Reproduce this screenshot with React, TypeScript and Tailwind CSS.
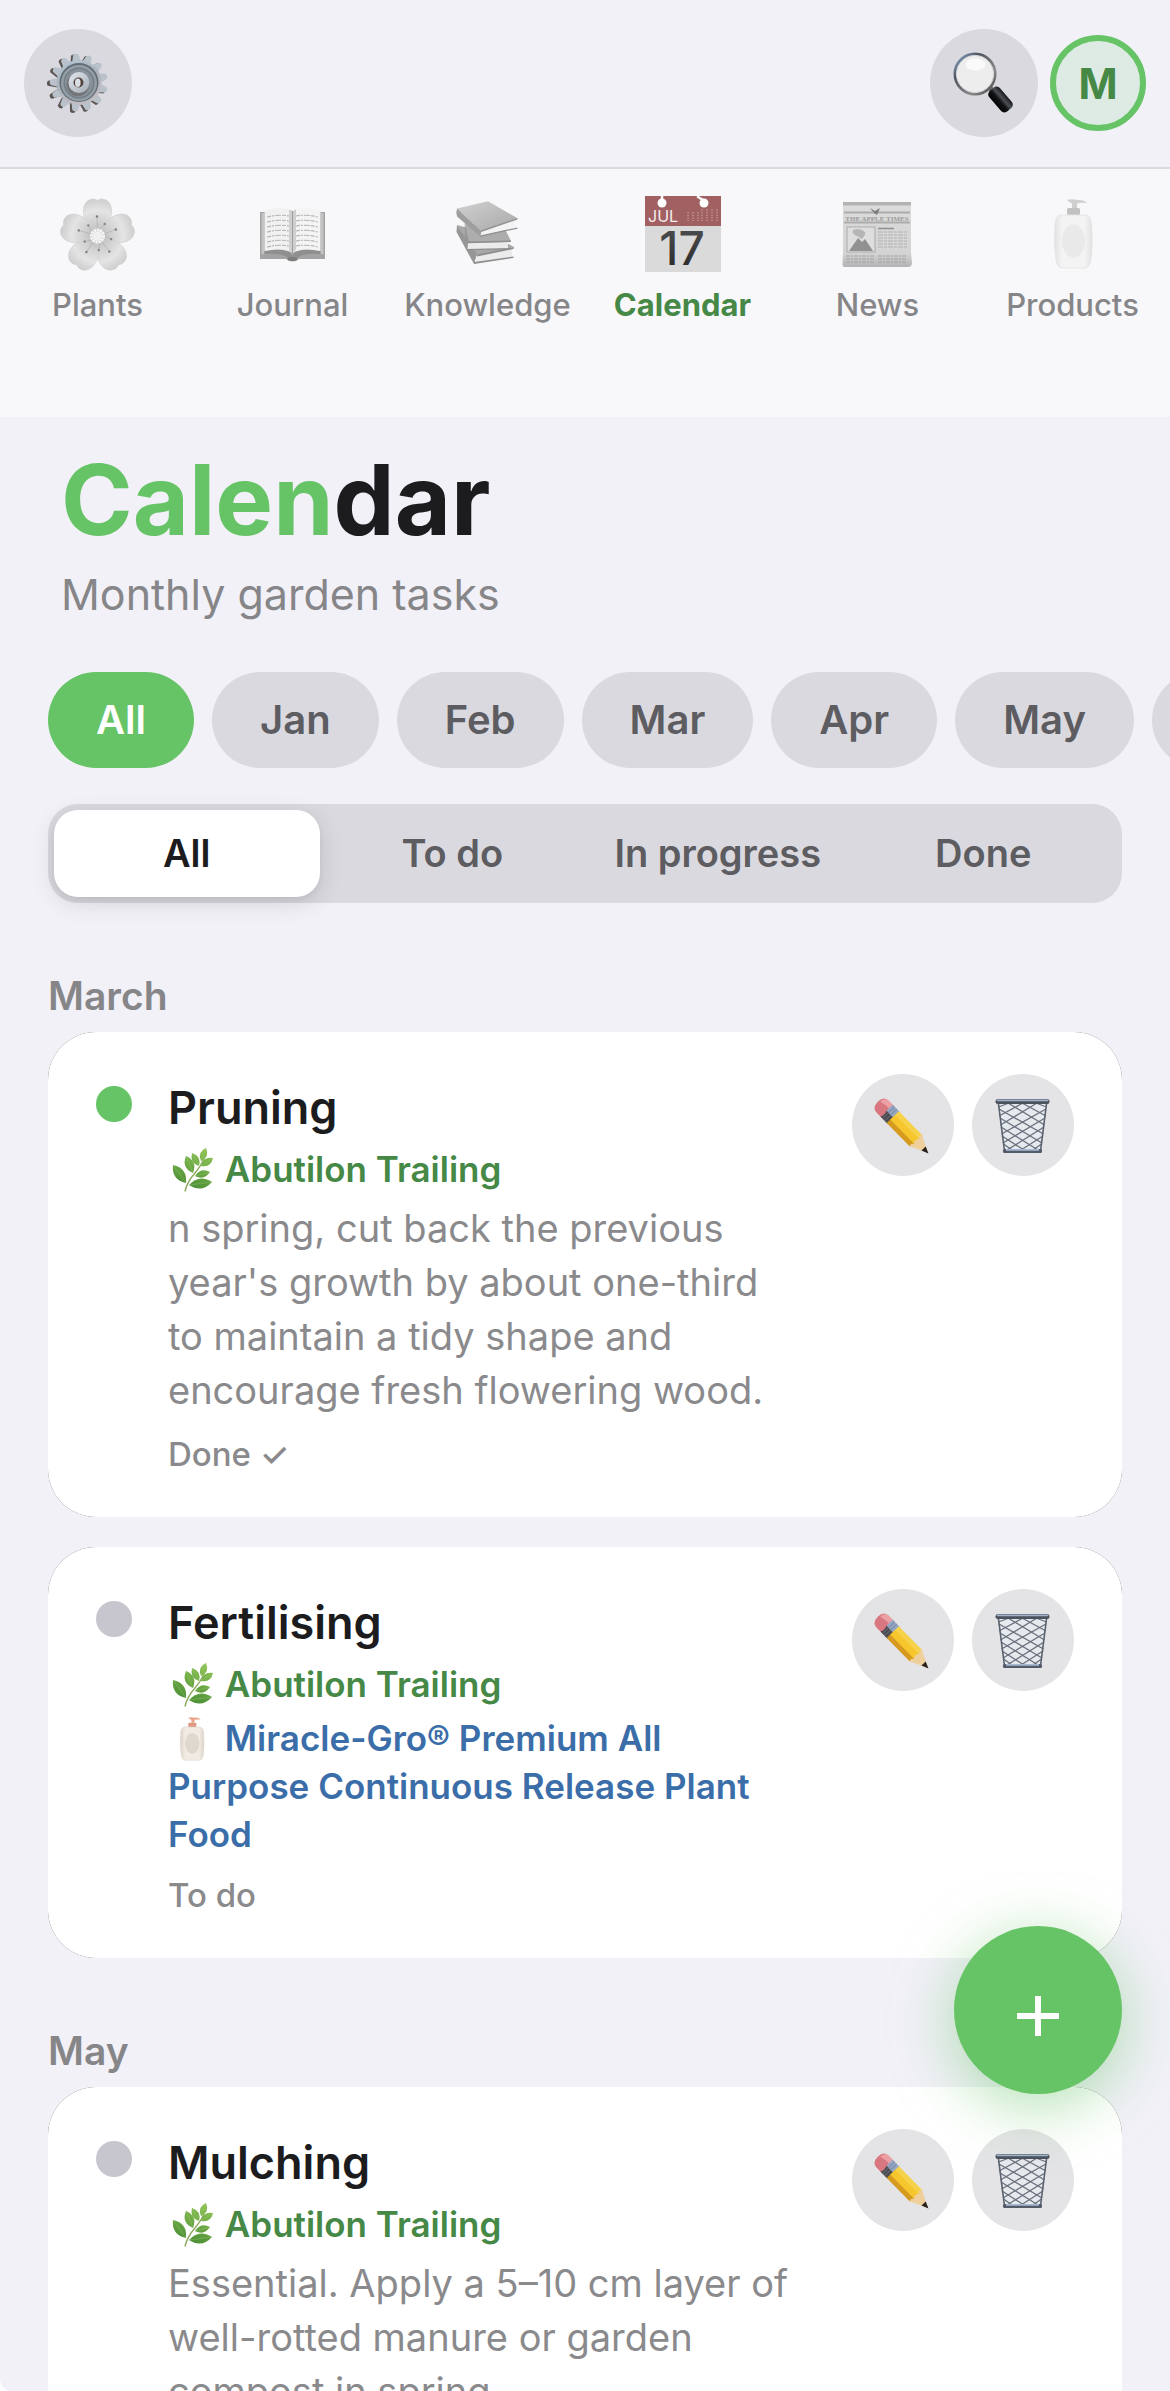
import { useState } from "react";
import type { ReactNode } from "react";

function GearIcon() {
  const teeth = Array.from({ length: 13 }, (_, i) => (i * 360) / 13 - 6);
  return (
    <svg viewBox="0 0 62 62" className="size-[62px]" aria-hidden="true">
      <defs>
        <linearGradient id="gear-face" x1="0" y1="0" x2="0.4" y2="1">
          <stop offset="0" stopColor="#b4c6d6" />
          <stop offset="0.55" stopColor="#abb3bc" />
          <stop offset="1" stopColor="#c2bdc2" />
        </linearGradient>
        <linearGradient id="gear-hub" x1="0" y1="0" x2="1" y2="1">
          <stop offset="0" stopColor="#e4e9ee" />
          <stop offset="1" stopColor="#a2abb5" />
        </linearGradient>
      </defs>
      <g fill="#5b5654">
        {teeth.map((a) => (
          <path key={a} d="M27 12 L28.5 2.5 Q31 0.5 33.5 2.5 L35 12Z" transform={`translate(-1.6 0.8) rotate(${a} 31 31)`} />
        ))}
      </g>
      <g fill="#b9c2cb">
        {teeth.map((a) => (
          <path key={a} d="M25.8 13 L28.3 3 Q31 0.8 33.700 3 L36.200 13Z" transform={`translate(0.8 -0.3) rotate(${a} 31 31)`} />
        ))}
      </g>
      <circle cx="32" cy="30.500" r="22.500" fill="url(#gear-face)" />
      <circle cx="32" cy="30.500" r="19.500" fill="#626c74" />
      <circle cx="32" cy="31" r="18" fill="#939da5" />
      <circle cx="32" cy="31" r="15.500" fill="#737d85" />
      <circle cx="32" cy="31" r="14" fill="#88929b" />
      <circle cx="31" cy="32.500" r="11.500" fill="#5f5a57" opacity="0.500" />
      <circle cx="32" cy="30.500" r="10.500" fill="url(#gear-hub)" />
      <circle cx="31.500" cy="30.500" r="5" fill="#54433d" />
      <ellipse cx="30.800" cy="30.800" rx="2.800" ry="4.200" fill="#dadde2" />
    </svg>
  );
}

function MagnifierIcon() {
  return (
    <svg viewBox="0 0 62 62" className="size-[62px]" aria-hidden="true">
      <defs>
        <linearGradient id="lens-rim" x1="0" y1="0" x2="1" y2="1">
          <stop offset="0" stopColor="#8db0dd" />
          <stop offset="0.3" stopColor="#4d535b" />
          <stop offset="0.7" stopColor="#8a8a8a" />
          <stop offset="1" stopColor="#3e3e40" />
        </linearGradient>
        <linearGradient id="lens-handle" x1="0" y1="0" x2="0" y2="1">
          <stop offset="0" stopColor="#16181a" />
          <stop offset="0.35" stopColor="#4c5055" />
          <stop offset="0.6" stopColor="#101214" />
          <stop offset="1" stopColor="#050505" />
        </linearGradient>
      </defs>
      <path d="M34 36 L38 33 L43 39 L39 43Z" fill="#6d6f73" />
      <rect x="-13.5" y="-7" width="27" height="14" rx="4.5" fill="url(#lens-handle)" transform="translate(47.5 47.5) rotate(49)" />
      <circle cx="22" cy="22" r="20" fill="#ededee" stroke="url(#lens-rim)" strokeWidth="3" />
      <circle cx="22" cy="22" r="18.6" fill="none" stroke="#d2d4d8" strokeWidth="1" />
      <ellipse cx="22.5" cy="12.5" rx="10" ry="6" fill="#fafafa" />
    </svg>
  );
}

function FlowerIcon() {
  return (
    <svg viewBox="0 0 76 76" className="size-[76px]" aria-hidden="true">
      <defs>
        <radialGradient id="petal" gradientUnits="userSpaceOnUse" cx="0" cy="0" r="37">
          <stop offset="0" stopColor="#b4b4b4" />
          <stop offset="0.35" stopColor="#cfcfcf" />
          <stop offset="0.7" stopColor="#e4e4e4" />
          <stop offset="1" stopColor="#cecece" />
        </radialGradient>
      </defs>
      <g transform="translate(37.5 40)">
        {[0, 72, 144, 216, 288].map((a) => (
          <g key={a} transform={`rotate(${a})`}>
            <path
              d="M0 0 C-7 -6 -15 -15 -14 -27 C-13 -36 -5 -39 0 -35.500 C5 -39 13 -36 14 -27 C15 -15 7 -6 0 0Z"
              fill="url(#petal)"
              stroke="#cfcfcf"
              strokeWidth="0.600"
            />
          </g>
        ))}
        {[0, 72, 144, 216, 288].map((a) => (
          <g key={a} transform={`rotate(${a})`} stroke="#b2b2b2" strokeWidth="0.700">
            <path d="M0 -5 L-0.500 -19 M1 -5 L7 -12" fill="none" />
            <circle cx="-0.500" cy="-19.500" r="1.200" fill="#7c7c7c" stroke="none" />
            <circle cx="7.200" cy="-12" r="1.200" fill="#868686" stroke="none" />
          </g>
        ))}
        <circle r="7.500" fill="#d6d6d6" />
        <circle r="6" fill="none" stroke="#f6f6f6" strokeWidth="3" strokeDasharray="2 1" />
        <circle r="4.500" fill="#f0f0f0" />
      </g>
    </svg>
  );
}

function OpenBookIcon() {
  const rows = [20, 25, 30, 35, 40, 45, 50];
  return (
    <svg viewBox="0 0 76 76" className="size-[76px]" aria-hidden="true">
      <path d="M5 16 H70 V63 H44 Q37.500 68 31 63 H5Z" fill="#a3a3a3" />
      <path d="M6.500 17 H9 V58 H6.500Z M66 17 H68.500 V58 H66Z" fill="#c4c4c4" />
      <path d="M10 55 Q26 52 35 56 L37.500 60 L40 56 Q50 52 65 55 V58 Q48 57 42 62 H33 Q27 57 10 58Z" fill="#8f8f8f" />
      <path d="M9.500 15 Q30 9 37.500 15.500 V57 Q28 51 9.500 55Z" fill="#f1f1f1" />
      <path d="M65.500 15 Q45 9 37.500 15.500 V57 Q47 51 65.500 55Z" fill="#f4f4f4" />
      <path d="M34 13.500 Q36.500 14 37.500 15.500 Q38.500 14 41 13.500 V54 L37.500 57 L34 54Z" fill="#cfcfcf" />
      <path d="M37.500 15 V57" stroke="#9c9c9c" strokeWidth="1" />
      {rows.map((y) => (
        <path
          key={y}
          d={`M12 ${y + 1} Q24 ${y - 2} 34 ${y} M41 ${y} Q51 ${y - 2} 63 ${y + 1}`}
          stroke="#b5b5b5"
          strokeWidth="1.100"
          strokeDasharray="4 1 2 1 6 1"
          fill="none"
        />
      ))}
      <ellipse cx="37.500" cy="63" rx="5" ry="2" fill="#7d7d7d" />
    </svg>
  );
}

function BooksIcon() {
  return (
    <svg viewBox="0 0 76 76" className="size-[76px]" aria-hidden="true">
      <defs>
        <linearGradient id="book-cover" x1="0" y1="0" x2="1" y2="1">
          <stop offset="0" stopColor="#d0d0d0" />
          <stop offset="1" stopColor="#a9a9a9" />
        </linearGradient>
      </defs>
      <path d="M7 29 L40 38 L64 51 L27 60Z" fill="#a8a8a8" />
      <path d="M7 29 L27 58 L24 68 L6.500 36Z" fill="#969696" />
      <path d="M27 59 L62 52 V61 L26 66Z" fill="#ececec" />
      <path d="M27 58.500 L64 51 L63.500 53 L27 60.500Z M24 66 L63.500 60.500 V62 L24 68Z" fill="#8f8f8f" />
      <path d="M15 27 L55 33 L61 45 L18 46Z" fill="#adadad" />
      <path d="M14.700 27 L19 46 L17 54 L15 46Z" fill="#979797" />
      <path d="M18 47 L58 46 V53 L17.500 53.300Z" fill="#ebebeb" />
      <path d="M17 45.500 L61 44.500 V46 L18 47.200Z M17 53 L59 52 V53.500 L17 54.300Z" fill="#909090" />
      <path d="M7 12.500 L38 5.300 L67.500 22.300 L31 35Z" fill="url(#book-cover)" />
      <path d="M7 12.500 Q5.500 17 7.300 20.700 L30 40.300 L31 35Z" fill="#9e9e9e" />
      <path d="M31.500 35.500 L65 24 Q64 28 66 31.500 L30.500 40Z" fill="#f3f3f3" />
      <path d="M31 34.500 L67.500 22 V23.500 L31 36Z M30 39.500 L67.500 31.500 V32.700 L30 40.800Z" fill="#8f8f8f" />
    </svg>
  );
}

function CalendarIcon() {
  return (
    <svg viewBox="0 0 76 76" className="size-[76px]" aria-hidden="true">
      <defs>
        <linearGradient id="digits" x1="0" y1="0" x2="0" y2="1">
          <stop offset="0" stopColor="#505254" />
          <stop offset="1" stopColor="#262626" />
        </linearGradient>
      </defs>
      <rect width="76" height="76" fill="#dadadb" />
      <rect width="76" height="30" fill="#a16061" />
      <path d="M17 0 V5 M53 1 L58 4" stroke="#fff" strokeWidth="2.500" strokeLinecap="round" />
      <circle cx="17" cy="7" r="4.500" fill="#fff" />
      <circle cx="59" cy="7" r="4.500" fill="#fff" />
      <text x="3" y="25.500" fontFamily="Inter, sans-serif" fontWeight="400" fontSize="16" fill="#f6eded">JUL</text>
      {[43, 48, 53, 57, 62, 67, 72].map((x, i) => (
        <path key={x} d={`M${x} ${i < 3 ? 16 : 13} V25`} stroke="#b88384" strokeWidth="2" strokeDasharray="1.500 1.200" />
      ))}
      <text x="37" y="69" textAnchor="middle" fontFamily="Inter, sans-serif" fontWeight="500" fontSize="46" fill="url(#digits)">17</text>
    </svg>
  );
}

function NewspaperIcon() {
  const lines = [35, 38, 41, 44, 47, 50];
  return (
    <svg viewBox="0 0 76 76" className="size-[76px]" aria-hidden="true">
      <defs>
        <linearGradient id="paper" x1="0" y1="0" x2="0" y2="1">
          <stop offset="0" stopColor="#dcdcdc" />
          <stop offset="0.8" stopColor="#d3d3d3" />
          <stop offset="1" stopColor="#b2b2b2" />
        </linearGradient>
      </defs>
      <path d="M3 6 H71 V55 L72 68 Q71 71 68 71 H5 Q2 71 2.500 68 L3 55Z" fill="url(#paper)" />
      <rect x="3" y="6" width="68" height="3.500" fill="#b3b3b3" />
      <path d="M4 16.500 H70 M4 26.500 H70" stroke="#acacac" strokeWidth="1.800" />
      <path d="M30 12 L35 15 L40 12 L37 19 L34 17Z" fill="#7d7d7d" />
      <text x="37" y="24.500" textAnchor="middle" fontFamily="Liberation Serif, serif" fontWeight="700" fontSize="7" fill="#9b9b9b">THE APPLE TIMES</text>
      <rect x="7" y="31" width="28" height="25" fill="#dedede" stroke="#ababab" strokeWidth="1" />
      <path d="M9 55 L18 42 L22 46 L25 43 L33 55Z" fill="#919191" />
      <path d="M19 41 Q11 38 13 34 Q20 31 25 36 Q26 40 21 43Z" fill="#b5b5b5" />
      <path d="M38 32.500 H54" stroke="#8f8f8f" strokeWidth="1.500" />
      {lines.map((y) => (
        <path key={y} d={`M38 ${y + 1} H67`} stroke="#b2b2b2" strokeWidth="1.200" strokeDasharray="5 1 3 1" />
      ))}
      {[60, 63, 66].map((y) => (
        <path key={y} d={`M6 ${y} H34 M38 ${y} H67`} stroke="#a3a3a3" strokeWidth="1.200" strokeDasharray="4 1 2 1" />
      ))}
    </svg>
  );
}

function LotionIcon({ muted = false }: { muted?: boolean }) {
  const c = muted
    ? { id: "lotion-muted", pump: "#cfcfcf", pumpDark: "#c2c2c2", edge: "#e2e2e2", mid: "#f3f3f3", label: "#e9e9e9" }
    : { id: "lotion-color", pump: "#eaa38b", pumpDark: "#df9a83", edge: "#ddd3c8", mid: "#f1ebe3", label: "#dfd8cf" };
  return (
    <svg
      viewBox="0 0 40 70"
      className={muted ? "h-[70px] w-10" : "inline-block h-[44px] w-12 align-[-10px]"}
      aria-hidden="true"
    >
      <defs>
        <linearGradient id={c.id}>
          <stop offset="0" stopColor={c.edge} />
          <stop offset="0.2" stopColor={c.mid} />
          <stop offset="0.8" stopColor={c.mid} />
          <stop offset="1" stopColor={c.edge} />
        </linearGradient>
      </defs>
      <path d="M14 1 Q19 -0.500 24 1 Q31 0.500 34 4 Q28 3.500 24 4.500 V9 H19 V4.500 Q16 3 14 1Z" fill={c.pump} />
      <rect x="14" y="9" width="13" height="7" rx="1.500" fill={c.pumpDark} />
      <path d="M7 16 H33 Q38 17 38.500 26 Q40 45 38 60 Q37 69 31 69 H10 Q4 69 3 60 Q0.500 45 2 26 Q2.500 17 7 16Z" fill={`url(#${c.id})`} stroke={c.edge} strokeWidth="0.800" />
      <ellipse cx="20.500" cy="42" rx="11.500" ry="16.500" fill={c.label} />
    </svg>
  );
}

function Leaf({ tip, base, w }: { tip: [number, number]; base: [number, number]; w: number }) {
  const mx = (tip[0] + base[0]) / 2;
  const my = (tip[1] + base[1]) / 2;
  const dx = base[0] - tip[0];
  const dy = base[1] - tip[1];
  const len = Math.hypot(dx, dy);
  const nx = (-dy / len) * w;
  const ny = (dx / len) * w;
  return (
    <>
      <path d={`M${tip[0]} ${tip[1]} Q${mx + nx} ${my + ny} ${base[0]} ${base[1]} Q${mx - nx} ${my - ny} ${tip[0]} ${tip[1]}Z`} fill="url(#leaf)" />
      <path d={`M${tip[0]} ${tip[1]} L${base[0]} ${base[1]}`} stroke="#9ccb70" strokeWidth="0.400" />
    </>
  );
}

function HerbIcon() {
  return (
    <svg viewBox="0 0 48 44" className="inline-block h-[44px] w-12 align-[-10px]" aria-hidden="true">
      <defs>
        <linearGradient id="leaf" gradientUnits="userSpaceOnUse" x1="34" y1="0" x2="20" y2="42">
          <stop offset="0" stopColor="#8fc455" />
          <stop offset="1" stopColor="#478c35" />
        </linearGradient>
      </defs>
      <path d="M17 43.500 Q19 34 27 25 Q33 18 36 11" fill="none" stroke="#8aa95c" strokeWidth="1.400" />
      <Leaf tip={[5, 17]} base={[18, 35]} w={10} />
      <Leaf tip={[18, 8]} base={[25, 25]} w={9} />
      <Leaf tip={[24, 5]} base={[31, 18]} w={7} />
      <Leaf tip={[38, 0]} base={[33, 13]} w={7} />
      <Leaf tip={[45, 10]} base={[33, 18]} w={7} />
      <Leaf tip={[42, 24]} base={[27, 28]} w={7} />
      <Leaf tip={[44, 34]} base={[21, 37]} w={10} />
    </svg>
  );
}

function PencilIcon() {
  return (
    <svg viewBox="0 0 60 60" className="size-[60px]" aria-hidden="true">
      <g transform="translate(6.500 8.500) rotate(45.600)">
        <path d="M13 -8.500 H4 Q-2.500 -8 -2.500 0 Q-2.500 8 4 8.500 H13 Q15 0 13 -8.500Z" fill="#d97780" />
        <path d="M12 -8.500 H4 Q-0.500 -8 -1 -2 Q6 -4 13 -3Z" fill="#eda0a4" />
        <path d="M10 -8.500 H20 V0 H10Z" fill="#92a6c6" />
        <path d="M10 0 H20 V8.500 H10 Q12 4 10 0Z" fill="#4c4c50" />
        <path d="M13 -8.500 V8.500 M16 -8.500 V8.500" stroke="#70788a" strokeWidth="0.800" />
        <path d="M19 -8.500 H53 L55 -3 H19Z" fill="#f6d24b" />
        <path d="M19 -3.500 H54 V4 H19Z" fill="#f7c62c" />
        <path d="M19 3.500 H54 L52 8.500 H19Z" fill="#d59a1e" />
        <path d="M52 -8.500 L69 0 L52 8.500 Q49.500 6 53 3.500 Q49.500 0 53 -3.500 Q49.500 -6 52 -8.500Z" fill="#efd09c" />
        <path d="M63 -3 L70 0 L63 3Z" fill="#28211d" />
      </g>
    </svg>
  );
}

function BasketIcon() {
  return (
    <svg viewBox="0 0 60 60" className="size-[60px]" aria-hidden="true">
      <path d="M5 8 H54 L48 56 H11.500Z" fill="#e6e9ee" />
      <g fill="none" stroke="#69717d" strokeWidth="1.300">
        <path d="M5.500 12 L16 8 M6 21 L30 8 M7.500 30 L44 8 M8.500 39 L53 14 M10 48 L52 23 M14 55 L51 32 M28 55 L50 41 M40 55 L48.500 49" />
        <path d="M53.500 12 L43 8 M53 21 L29 8 M51.500 30 L15 8 M50.500 39 L6 14 M49 48 L7 23 M45 55 L8 32 M31 55 L9 41 M19 55 L10.500 49" />
      </g>
      <path d="M5.500 9 L11.500 56 M53.500 9 L47.500 56" stroke="#5a626e" strokeWidth="1.600" />
      <rect x="2.500" y="4" width="54" height="5" rx="2.500" fill="#4b525d" />
      <path d="M4.500 5.300 H54.500" stroke="#a3b4ca" strokeWidth="1.800" strokeLinecap="round" />
      <rect x="10" y="54" width="39" height="4" rx="1.500" fill="#535b68" />
      <path d="M13 54.800 H46" stroke="#a7b9d3" strokeWidth="1.800" />
    </svg>
  );
}

const tabs: { label: string; icon: ReactNode }[] = [
  { label: "Plants", icon: <FlowerIcon /> },
  { label: "Journal", icon: <OpenBookIcon /> },
  { label: "Knowledge", icon: <BooksIcon /> },
  { label: "Calendar", icon: <CalendarIcon /> },
  { label: "News", icon: <NewspaperIcon /> },
  { label: "Products", icon: <LotionIcon muted /> },
];

const months = ["All", "Jan", "Feb", "Mar", "Apr", "May", "Jun", "Jul", "Aug", "Sep", "Oct", "Nov", "Dec"];
const statuses = ["All", "To do", "In progress", "Done"];

type Task = { title: string; plant: string; product?: string; note?: string; status: string; done?: boolean };

const groups: { month: string; tasks: Task[] }[] = [
  {
    month: "March",
    tasks: [
      {
        title: "Pruning",
        plant: "Abutilon Trailing",
        note: "n spring, cut back the previous year's growth by about one-third to maintain a tidy shape and encourage fresh flowering wood.",
        status: "Done ✓",
        done: true,
      },
      {
        title: "Fertilising",
        plant: "Abutilon Trailing",
        product: "Miracle-Gro® Premium All Purpose Continuous Release Plant Food",
        status: "To do",
      },
    ],
  },
  {
    month: "May",
    tasks: [
      {
        title: "Mulching",
        plant: "Abutilon Trailing",
        note: "Essential. Apply a 5–10 cm layer of well-rotted manure or garden compost in spring.",
        status: "To do",
      },
    ],
  },
];

function TaskCard({ task }: { task: Task }) {
  return (
    <li className="rounded-[48px] bg-[#5e4a3c]">
      <article className="flex items-start rounded-[48px] bg-white px-12 py-[42px]">
        <span className={`mt-3 size-9 shrink-0 rounded-full ${task.done ? "bg-[#66c466]" : "bg-[#c7c6ce]"}`} />
        <div className="ml-9 min-w-0 flex-1">
          <h3 className="mb-1 text-[45px] leading-[67px] font-semibold text-[#1c1c1e]">{task.title}</h3>
          <p className="text-[35px] leading-[48px] font-semibold text-[#468846]">
            <HerbIcon /> {task.plant}
          </p>
          {task.product && (
            <p className="mt-[6px] text-[35px] leading-[48px] font-semibold text-[#3b6ea8]">
              <LotionIcon /> {task.product}
            </p>
          )}
          {task.note && <p className="mt-2 mb-px text-[38px] leading-[54px] text-[#8a8a8d]">{task.note}</p>}
          <p className="mt-4 text-[33px] leading-[42px] font-medium text-[#8a8a8d]">{task.status}</p>
        </div>
        <div className="ml-14 flex shrink-0 gap-[18px]">
          <button type="button" aria-label={`Edit ${task.title}`} className="flex size-[102px] items-center justify-center rounded-full bg-[#e4e4e6]">
            <PencilIcon />
          </button>
          <button type="button" aria-label={`Delete ${task.title}`} className="flex size-[102px] items-center justify-center rounded-full bg-[#e4e4e6]">
            <BasketIcon />
          </button>
        </div>
      </article>
    </li>
  );
}

export default function App() {
  const [month, setMonth] = useState("All");
  const [status, setStatus] = useState("All");

  return (
    <div className="flex h-screen flex-col overflow-hidden rounded-bl-xl bg-[#f2f1f8] font-['Inter',sans-serif]">
      <header className="flex shrink-0 items-center justify-between border-b-2 border-[#dad9df] px-6 pt-[29px] pb-[30px]">
        <button type="button" aria-label="Settings" className="flex size-[108px] items-center justify-center rounded-full bg-[#dad9df]">
          <GearIcon />
        </button>
        <div className="flex items-center gap-3">
          <button type="button" aria-label="Search" className="flex size-[108px] items-center justify-center rounded-full bg-[#dad9df]">
            <MagnifierIcon />
          </button>
          <button type="button" aria-label="Profile" className="flex size-24 items-center justify-center rounded-full border-[6px] border-[#66c466] bg-[#deebe5] text-[42px] font-bold text-[#468846]">
            M
          </button>
        </div>
      </header>

      <nav aria-label="Sections" className="grid shrink-0 grid-cols-6 bg-[#f8f8fb] pt-[27px] pb-[92px]">
        {tabs.map((tab) => {
          const active = tab.label === "Calendar";
          return (
            <a
              key={tab.label}
              href={`#${tab.label.toLowerCase()}`}
              aria-current={active ? "page" : undefined}
              className={`flex flex-col items-center gap-[13px] text-[31px] leading-10 ${active ? "font-bold text-[#468846]" : "font-medium text-[#868689]"}`}
            >
              <span className="flex size-[76px] items-center justify-center">{tab.icon}</span>
              {tab.label}
            </a>
          );
        })}
      </nav>

      <main className="flex-1 overflow-hidden px-12 pt-[31px]">
        <div className="px-[13px]">
          <h1 className="text-[97px] leading-[103px] font-bold text-[#1c1c1e]">
            <span className="text-[#66c466]">Calen</span>dar
          </h1>
          <p className="mt-[13px] text-[43px] leading-[60px] text-[#868689]">Monthly garden tasks</p>
        </div>

        <div className="-mx-12 mt-12 flex gap-[18px] overflow-hidden px-12">
          {months.map((m) => (
            <button
              key={m}
              type="button"
              aria-pressed={m === month}
              onClick={() => setMonth(m)}
              className={`h-24 shrink-0 rounded-full px-12 text-[40px] font-semibold ${m === month ? "bg-[#66c466] text-white" : "bg-[#dad9df] text-[#5c5c61]"}`}
            >
              {m}
            </button>
          ))}
        </div>

        <div className="mt-9 grid grid-cols-4 rounded-[30px] bg-[#dad9df] p-[6px]">
          {statuses.map((s) => (
            <button
              key={s}
              type="button"
              aria-pressed={s === status}
              onClick={() => setStatus(s)}
              className={`h-[87px] rounded-3xl text-[38px] font-semibold ${s === status ? "bg-white text-[#1c1c1e] shadow-[0_6px_24px_rgba(0,0,0,0.12),0_3px_6px_rgba(0,0,0,0.05)]" : "text-[#5c5c61]"}`}
            >
              {s}
            </button>
          ))}
        </div>

        {groups.map((g) => (
          <section key={g.month}>
            <h2 className="mt-[69px] mb-3 text-[39px] leading-[48px] font-semibold text-[#868689]">{g.month}</h2>
            <ul className="flex flex-col gap-[30px]">
              {g.tasks.map((t) => (
                <TaskCard key={t.title} task={t} />
              ))}
            </ul>
          </section>
        ))}
      </main>

      <button
        type="button"
        aria-label="Add task"
        className="fixed right-12 bottom-[297px] flex size-[168px] items-center justify-center rounded-full bg-[#66c466] pt-3 shadow-[0_12px_60px_rgba(102,196,102,0.5)]"
      >
        <svg viewBox="0 0 42 42" className="size-[42px]" aria-hidden="true">
          <path d="M0 21 H42 M21 1 V41" stroke="#fff" strokeWidth="6" />
        </svg>
      </button>
    </div>
  );
}
